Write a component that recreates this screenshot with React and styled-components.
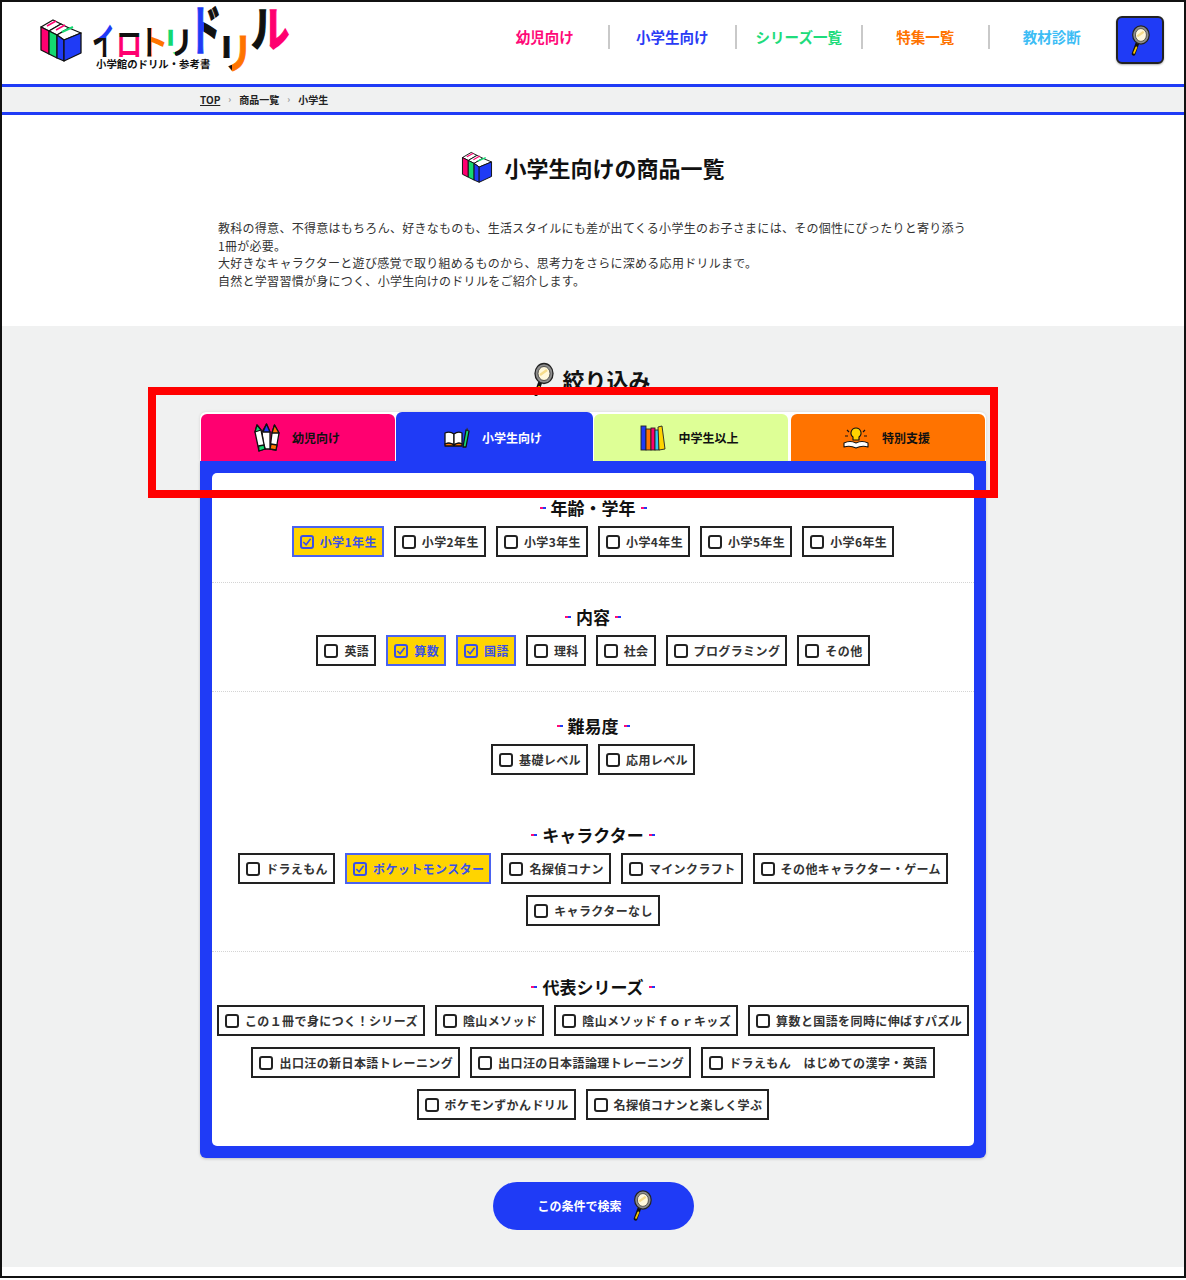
import React, { useState } from "react";
import styled, { createGlobalStyle } from "styled-components";

const BLUE = "#1f3bf6";
const FONT = `"Noto Sans CJK JP", "Noto Sans", sans-serif`;

const GlobalStyle = createGlobalStyle`
  html, body { margin: 0; padding: 0; background: #fff; }
  body { font-family: ${FONT}; color: #111; }
  * { box-sizing: border-box; }
`;

const Frame = styled.div`
  position: relative;
  width: 1186px;
  height: 1278px;
  border: 2px solid #111;
  background: #fff;
  overflow: hidden;
`;

const Header = styled.header`
  height: 82px;
  display: flex;
  align-items: flex-start;
  padding: 14px 20px 0 37px;
`;

const LogoWrap = styled.a`
  display: flex;
  align-items: flex-start;
  gap: 8px;
  margin-top: -12px;
`;

const Stack = styled.svg`
  flex: none;
  margin-top: ${(p) => p.$top || 0}px;
`;

const Nav = styled.nav`
  margin-left: auto;
  margin-right: 2px;
  height: 42px;
  display: flex;
  align-items: center;
`;

const NavItem = styled.a`
  width: 126.5px;
  height: 24px;
  line-height: 24px;
  text-align: center;
  font-size: 14.5px;
  font-weight: 700;
  color: ${(p) => p.$color};
  & + & {
    border-left: 2px solid #c9c9c9;
  }
`;

const SearchIcon = styled.button`
  width: 48px;
  height: 48px;
  padding: 0;
  display: flex;
  align-items: center;
  justify-content: center;
  background: ${BLUE};
  border: 2px solid #222;
  border-radius: 6px;
  box-shadow: 0 1px 2px rgba(0, 0, 0, 0.3);
`;

const Breadcrumb = styled.div`
  height: 31px;
  display: flex;
  align-items: center;
  gap: 8px;
  padding-left: 198px;
  background: #f0f1f1;
  border-top: 3px solid ${BLUE};
  border-bottom: 3px solid ${BLUE};
  font-size: 10px;
  font-weight: 700;
  color: #222;
`;

const Crumb = styled.a`
  text-decoration: ${(p) => (p.$link ? "underline" : "none")};
`;

const CrumbSep = styled.span`
  color: #999;
  font-size: 9px;
`;

const Intro = styled.section`
  height: 211px;
  padding-top: 36px;
`;

const PageTitle = styled.h1`
  margin: 0;
  height: 32px;
  display: flex;
  align-items: center;
  justify-content: center;
  gap: 11px;
  font-size: 22px;
  line-height: 32px;
  font-weight: 700;
`;

const Lead = styled.p`
  margin: 36px 0 0 216px;
  font-size: 12px;
  line-height: 17.5px;
  letter-spacing: 0.28px;
  color: #333;
  white-space: nowrap;
`;

const FilterArea = styled.section`
  height: 941px;
  padding-top: 37px;
  background: #f0f1f1;
`;

const FilterTitle = styled.h2`
  margin: 0 0 17px;
  height: 32px;
  display: flex;
  align-items: center;
  justify-content: center;
  gap: 7px;
  padding-right: 4px;
  font-size: 22px;
  line-height: 32px;
  font-weight: 700;
`;

const FilterBox = styled.div`
  width: 786px;
  margin: 0 auto;
`;

const Tabs = styled.div`
  height: 49px;
  display: flex;
  align-items: flex-end;
  gap: 1px;
  padding: 0 1px;
  background: #fff;
  border-radius: 6px 6px 0 0;
  box-shadow: 0 0 3px rgba(0, 0, 0, 0.12);
`;

const Tab = styled.button`
  flex: ${(p) => (p.$active ? "0 0 197px" : "1")};
  height: ${(p) => (p.$active ? 49 : 47)}px;
  display: flex;
  align-items: center;
  justify-content: center;
  gap: ${(p) => p.$gap}px;
  padding: ${(p) => (p.$active ? "2px 3px 0 0" : "0 3px 0 0")};
  border: 0;
  border-radius: 6px 6px 0 0;
  background: ${(p) => p.$bg};
  color: ${(p) => (p.$active ? "#fff" : "#111")};
  font-family: ${FONT};
  font-size: 12px;
  font-weight: 700;
  &:last-child {
    margin-left: 2px;
  }
`;

const Panel = styled.div`
  padding: 12px;
  border-radius: 0 0 6px 6px;
  background: ${BLUE};
  box-shadow: 0 1px 3px rgba(0, 0, 0, 0.2);
`;

const PanelBody = styled.div`
  padding-top: 1px;
  border-radius: 5px;
  background: #fff;
`;

const Group = styled.div`
  padding: 23px 0 25px;
  border-bottom: 1px dotted ${(p) => (p.$line ? "#d4d4d4" : "transparent")};
  &:last-child {
    padding: 24px 0 26px;
    border-bottom: 0;
  }
`;

const GroupTitle = styled.h3`
  margin: 0 0 7px;
  height: 22px;
  display: flex;
  align-items: center;
  justify-content: center;
  gap: 5px;
  font-size: 17px;
  line-height: 22px;
  font-weight: 700;
  &::before,
  &::after {
    content: "";
    width: 6px;
    height: 2px;
    background: linear-gradient(90deg, #ff0a78 50%, ${BLUE} 50%);
  }
`;

const Options = styled.div`
  display: flex;
  flex-wrap: wrap;
  justify-content: center;
  gap: 11px 10px;
  padding: 0 3px;
`;

const Option = styled.button`
  height: 31px;
  display: flex;
  align-items: center;
  gap: 6px;
  padding: 0 5px 0 6px;
  background: ${(p) => (p.$on ? "#ffd400" : "#fff")};
  border: 2px solid ${(p) => (p.$on ? "#4a62f0" : "#222")};
  color: ${(p) => (p.$on ? "#3a50e8" : "#333")};
  font-family: ${FONT};
  font-size: 12px;
  font-weight: 700;
  letter-spacing: 0.4px;
  white-space: pre;
`;

const Box = styled.span`
  width: 14px;
  height: 14px;
  flex: none;
  display: flex;
  align-items: center;
  justify-content: center;
  border: 2px solid ${(p) => (p.$on ? "#3a50e8" : "#222")};
  border-radius: 3px;
`;

const SubmitRow = styled.div`
  display: flex;
  justify-content: center;
  margin-top: 24px;
`;

const Submit = styled.button`
  width: 201px;
  height: 48px;
  display: flex;
  align-items: center;
  justify-content: center;
  gap: 9px;
  padding: 0 0 2px 4px;
  border: 0;
  border-radius: 24px;
  background: ${BLUE};
  color: #fff;
  font-family: ${FONT};
  font-size: 12px;
  font-weight: 700;
`;

const Highlight = styled.div`
  position: absolute;
  left: 146px;
  top: 385px;
  width: 850px;
  height: 111px;
  border: 8px solid #ff0000;
  pointer-events: none;
`;

const BookStack = ({ size = 44, top }) => (
  <Stack $top={top} width={size} height={size} viewBox="0 0 44 44">
    <g stroke="#111" strokeWidth="1.3" strokeLinejoin="round">
      <polygon points="2,9 14,2 22,6 10,13" fill="#fff" />
      <polygon points="2,9 10,13 10,36 2,32" fill="#ff0070" />
      <polygon points="10,13 22,6 30,10 18,17" fill="#fff" />
      <polygon points="10,13 18,17 18,40 10,36" fill="#14d870" />
      <polygon points="18,17 30,10 42,15 25,22" fill="#fff" />
      <polygon points="18,17 25,22 25,43 18,40" fill={BLUE} />
      <polygon points="25,22 42,15 42,35 25,43" fill={BLUE} />
    </g>
    <path d="M8 8 L17 3 M17 12 L26 7" stroke="#ff0070" strokeWidth="1.5" />
    <path d="M23 14 L34 9" stroke="#14d870" strokeWidth="2" />
  </Stack>
);

const Magnifier = ({ width = 24, height = 34 }) => (
  <svg width={width} height={height} viewBox="0 0 24 34">
    <path d="M9 21 L5 32" stroke="#111" strokeWidth="4" strokeLinecap="round" />
    <path d="M8 25 L5.5 31" stroke="#f5c400" strokeWidth="2" strokeLinecap="round" />
    <ellipse cx="13" cy="11.5" rx="9" ry="10" fill="#8d8d8d" stroke="#222" strokeWidth="1.3" />
    <ellipse cx="13" cy="11.5" rx="6" ry="7" fill="#fff8dc" stroke="#333" strokeWidth="0.8" />
    <path d="M9 13 L16 8" stroke="#f6dc8c" strokeWidth="2.5" />
  </svg>
);

const Crayons = () => (
  <svg width="28" height="30" viewBox="0 0 28 30">
    <g stroke="#111" strokeWidth="1.3" strokeLinejoin="round">
      <path d="M19 10 L21.5 2 L26 10 L23 27 L17 26 Z" fill="#fff" />
      <path d="M19 10 L21.5 2 L26 10 Z" fill="#ff7300" />
      <path d="M17 26 L18 21 L24 22 L23 27 Z" fill="#ff7300" />
      <path d="M9 9 L13.5 1 L17 9 L17 26 L11 26 Z" fill="#fff" />
      <path d="M10 9 L13.5 1 L17 9 Z" fill={BLUE} />
      <path d="M2 9 L4 2 L8 7 L12 26 L6 28 Z" fill="#fff" />
      <path d="M2 9 L4 2 L8 7 Z" fill="#14d870" />
      <path d="M5.500 23 L11 22 L12 26 L6 28 Z" fill="#14d870" />
    </g>
  </svg>
);

const OpenBook = () => (
  <svg width="26" height="22" viewBox="0 0 26 22">
    <g stroke="#111" strokeWidth="1.3" strokeLinejoin="round">
      <path d="M1 6 Q6 4 10 7 L10 18 Q6 15 1 17 Z" fill="#fff" />
      <path d="M10 7 Q14 4 18 6 L18 17 Q14 15 10 18 Z" fill="#fff" />
      <path d="M1 17 Q6 15 10 18 Q14 15 18 17 L18 19 L1 19 Z" fill="#ff7300" />
      <path d="M19 20 L22 3 L25 4 L22 20 Z" fill="#14d870" />
    </g>
    <path d="M22 3 L23 0.500 L25 4 Z" fill="#333" />
  </svg>
);

const Bookshelf = () => (
  <svg width="26" height="26" viewBox="0 0 26 26">
    <g stroke="#222" strokeWidth="0.9">
      <rect x="1" y="1" width="5" height="24" fill={BLUE} />
      <rect x="6" y="4" width="5" height="21" fill="#ff7300" />
      <rect x="11" y="3" width="4" height="22" fill="#ff0070" />
      <rect x="15" y="5" width="4" height="20" fill="#35c5f5" />
      <path d="M19 25 L18 2 L22 1 L25 24 Z" fill="#ffd400" />
    </g>
  </svg>
);

const BulbBook = () => (
  <svg width="26" height="24" viewBox="0 0 26 24">
    <g stroke="#111" strokeWidth="1.1" strokeLinejoin="round">
      <path d="M13 2 A5 5 0 0 1 16 11 L16 14 L10 14 L10 11 A5 5 0 0 1 13 2 Z" fill="#ffd400" />
      <path d="M1 17 Q7 14 13 17 Q19 14 25 17 L25 21 Q19 19 13 22 Q7 19 1 21 Z" fill="#fff" />
    </g>
    <path d="M4 4 L6 6 M22 4 L20 6 M2 10 L5 10 M24 10 L21 10" stroke="#111" strokeWidth="1.2" />
  </svg>
);

// logo letters are real text, squeezed and two-toned like the wordmark
const LOGO_GLYPHS = [
  { ch: "イ", x: 1, y: 51, size: 38, sx: 0.6, fill: "lg-i" },
  { ch: "ロ", x: 25, y: 52, size: 32, sx: 0.82, fill: "lg-ro" },
  { ch: "ト", x: 47, y: 51, size: 34, sx: 0.9, fill: "lg-to" },
  { ch: "リ", x: 71, y: 50, size: 32, sx: 1, fill: "lg-ri" },
  { ch: "ド", x: 98, y: 46, size: 54, sx: 0.6, fill: "lg-do", bold: 1.5 },
  { ch: "リ", x: 126, y: 65, size: 42, sx: 0.85, fill: "lg-ri2", bold: 1 },
  { ch: "ル", x: 160, y: 42, size: 48, sx: 0.8, fill: "lg-ru", bold: 1.5 },
];

const splitGradient = (id, a, b, at, vertical) => (
  <linearGradient key={id} id={id} x1="0" y1="0" x2={vertical ? 0 : 1} y2={vertical ? 1 : 0}>
    <stop offset={at} stopColor={a} />
    <stop offset={at} stopColor={b} />
  </linearGradient>
);

const Logo = () => (
  <svg width="210" height="80" viewBox="0 0 210 80">
    <defs>
      {splitGradient("lg-i", BLUE, "#111", 0.48, true)}
      {splitGradient("lg-ro", "#111", "#ff0070", 0.4, true)}
      {splitGradient("lg-to", "#111", "#ff7300", 0.42)}
      {splitGradient("lg-ri", "#14d870", "#111", 0.42)}
      {splitGradient("lg-do", BLUE, "#111", 0.45)}
      {splitGradient("lg-ri2", "#111", "#ff7300", 0.42)}
      {splitGradient("lg-ru", "#111", "#ff0070", 0.48)}
    </defs>
    <g fontFamily={FONT} fontWeight="700">
      {LOGO_GLYPHS.map((g) => (
        <text
          key={g.fill}
          transform={`translate(${g.x} ${g.y}) scale(${g.sx} 1)`}
          fontSize={g.size}
          fill={`url(#${g.fill})`}
          stroke={g.bold ? `url(#${g.fill})` : "none"}
          strokeWidth={g.bold || 0}
        >
          {g.ch}
        </text>
      ))}
      <text x="5" y="64" fontSize="10.400" fill="#111">小学館のドリル・参考書</text>
    </g>
  </svg>
);

const GROUPS = [
  { title: "年齢・学年", line: true, items: ["小学1年生", "小学2年生", "小学3年生", "小学4年生", "小学5年生", "小学6年生"] },
  { title: "内容", line: true, items: ["英語", "算数", "国語", "理科", "社会", "プログラミング", "その他"] },
  { title: "難易度", items: ["基礎レベル", "応用レベル"] },
  {
    title: "キャラクター",
    line: true,
    items: ["ドラえもん", "ポケットモンスター", "名探偵コナン", "マインクラフト", "その他キャラクター・ゲーム", "キャラクターなし"],
  },
  {
    title: "代表シリーズ",
    items: [
      "この１冊で身につく！シリーズ",
      "陰山メソッド",
      "陰山メソッドｆｏｒキッズ",
      "算数と国語を同時に伸ばすパズル",
      "出口汪の新日本語トレーニング",
      "出口汪の日本語論理トレーニング",
      "ドラえもん　はじめての漢字・英語",
      "ポケモンずかんドリル",
      "名探偵コナンと楽しく学ぶ",
    ],
  },
];

const NAV = [
  ["幼児向け", "#ff0a78"],
  ["小学生向け", "#2a3cf5"],
  ["シリーズ一覧", "#1fdc7c"],
  ["特集一覧", "#ff7300"],
  ["教材診断", "#3dbdf5"],
];

const TABS = [
  { label: "幼児向け", bg: "#ff0070", icon: <Crayons />, gap: 11 },
  { label: "小学生向け", bg: BLUE, icon: <OpenBook />, gap: 12, active: true },
  { label: "中学生以上", bg: "#deff96", icon: <Bookshelf />, gap: 12 },
  { label: "特別支援", bg: "#ff7300", icon: <BulbBook />, gap: 13 },
];

export default function App() {
  const [selected, setSelected] = useState(["小学1年生", "算数", "国語", "ポケットモンスター"]);

  const toggle = (name) => {
    setSelected((cur) => (cur.includes(name) ? cur.filter((n) => n !== name) : [...cur, name]));
  };

  return (
    <Frame>
      <GlobalStyle />
      <Header>
        <LogoWrap>
          <BookStack size={44} top={14} />
          <Logo />
        </LogoWrap>
        <Nav>
          {NAV.map(([label, color]) => (
            <NavItem key={label} $color={color}>{label}</NavItem>
          ))}
        </Nav>
        <SearchIcon aria-label="検索">
          <Magnifier width={22} height={32} />
        </SearchIcon>
      </Header>

      <Breadcrumb>
        <Crumb $link>TOP</Crumb>
        <CrumbSep>›</CrumbSep>
        <Crumb>商品一覧</Crumb>
        <CrumbSep>›</CrumbSep>
        <Crumb>小学生</Crumb>
      </Breadcrumb>

      <Intro>
        <PageTitle>
          <BookStack size={32} />
          小学生向けの商品一覧
        </PageTitle>
        <Lead>
          教科の得意、不得意はもちろん、好きなものも、生活スタイルにも差が出てくる小学生のお子さまには、その個性にぴったりと寄り添う
          <br />
          1冊が必要。
          <br />
          大好きなキャラクターと遊び感覚で取り組めるものから、思考力をさらに深める応用ドリルまで。
          <br />
          自然と学習習慣が身につく、小学生向けのドリルをご紹介します。
        </Lead>
      </Intro>

      <FilterArea>
        <FilterTitle>
          <Magnifier />
          絞り込み
        </FilterTitle>
        <FilterBox>
          <Tabs>
            {TABS.map((t) => (
              <Tab key={t.label} $bg={t.bg} $active={t.active} $gap={t.gap}>
                {t.icon}
                {t.label}
              </Tab>
            ))}
          </Tabs>
          <Panel>
            <PanelBody>
              {GROUPS.map((g) => (
                <Group key={g.title} $line={g.line}>
                  <GroupTitle>{g.title}</GroupTitle>
                  <Options>
                    {g.items.map((name) => {
                      const on = selected.includes(name);
                      return (
                        <Option key={name} $on={on} onClick={() => toggle(name)}>
                          <Box $on={on}>
                            {on && (
                              <svg width="10" height="10" viewBox="0 0 11 11">
                                <path d="M1.500 5.500 L4.500 8.500 L9.500 2" fill="none" stroke="#3a50e8" strokeWidth="1.800" />
                              </svg>
                            )}
                          </Box>
                          {name}
                        </Option>
                      );
                    })}
                  </Options>
                </Group>
              ))}
            </PanelBody>
          </Panel>
          <SubmitRow>
            <Submit>
              この条件で検索
              <Magnifier width={22} height={32} />
            </Submit>
          </SubmitRow>
        </FilterBox>
      </FilterArea>

      <Highlight />
    </Frame>
  );
}
